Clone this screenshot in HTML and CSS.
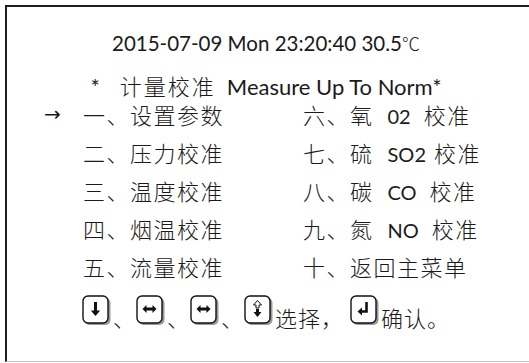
FILE: index.html
```html
<!DOCTYPE html>
<html lang="zh-CN">
<head>
    <meta charset="UTF-8">
    <title>计量校准</title>
    <link rel="stylesheet" href="styles.css">
</head>
<body>
    <div class="screen">
        <div class="title">2015-07-09 Mon 23:20:40 30.5<span class="cn deg">℃</span></div>
        <div class="subtitle">*<span class="cn sub-cn">计量校准</span>Measure Up To Norm*</div>

        <div class="menu">
            <span class="cursor">→</span>
            <span class="item">一、设置参数</span>
            <span class="item">六、氧<span class="code">02</span>校准</span>

            <span></span>
            <span class="item">二、压力校准</span>
            <span class="item">七、硫<span class="code tight">SO2</span>校准</span>

            <span></span>
            <span class="item">三、温度校准</span>
            <span class="item">八、碳<span class="code">CO</span>校准</span>

            <span></span>
            <span class="item">四、烟温校准</span>
            <span class="item">九、氮<span class="code">NO</span>校准</span>

            <span></span>
            <span class="item">五、流量校准</span>
            <span class="item">十、返回主菜单</span>
        </div>

        <div class="keys">
            <!-- 下 -->
            <svg class="key" viewBox="0 0 30 31" width="30" height="31">
                <rect x="2.5" y="3" width="26" height="27" rx="5" fill="#9a9a9a"/>
                <rect x="1" y="1" width="25" height="27" rx="5" fill="#fff" stroke="#111" stroke-width="1.4"/>
                <path d="M12 7h3v8.5h3.2l-4.7 5.5l-4.7-5.5h3.2z" fill="#111"/>
            </svg>
            <span class="sep">、</span>
            <!-- 左右 -->
            <svg class="key" viewBox="0 0 30 31" width="30" height="31">
                <rect x="2.5" y="3" width="26" height="27" rx="5" fill="#9a9a9a"/>
                <rect x="1" y="1" width="25" height="27" rx="5" fill="#fff" stroke="#111" stroke-width="1.4"/>
                <path d="M6.5 14l4-4v2.6h6v-2.6l4 4l-4 4v-2.6h-6v2.6z" fill="#111"/>
            </svg>
            <span class="sep">、</span>
            <svg class="key" viewBox="0 0 30 31" width="30" height="31">
                <rect x="2.5" y="3" width="26" height="27" rx="5" fill="#9a9a9a"/>
                <rect x="1" y="1" width="25" height="27" rx="5" fill="#fff" stroke="#111" stroke-width="1.4"/>
                <path d="M6.5 14l4-4v2.6h6v-2.6l4 4l-4 4v-2.6h-6v2.6z" fill="#111"/>
            </svg>
            <span class="sep">、</span>
            <!-- 上下 -->
            <svg class="key" viewBox="0 0 30 31" width="30" height="31">
                <rect x="2.5" y="3" width="26" height="27" rx="5" fill="#9a9a9a"/>
                <rect x="1" y="1" width="25" height="27" rx="5" fill="#fff" stroke="#111" stroke-width="1.4"/>
                <path d="M13.5 5.5l-4 4.5h2.5v3h3v-3h2.5z" fill="#fff" stroke="#111" stroke-width="1"/>
                <path d="M12 14h3v3h2.5l-4 5l-4-5h2.5z" fill="#111"/>
            </svg>
            <span class="label">选择，</span>
            <!-- 确认 -->
            <svg class="key" viewBox="0 0 30 31" width="30" height="31">
                <rect x="2.5" y="3" width="26" height="27" rx="5" fill="#9a9a9a"/>
                <rect x="1" y="1" width="25" height="27" rx="5" fill="#fff" stroke="#111" stroke-width="1.4"/>
                <path d="M16.5 7v9.5h-5" fill="none" stroke="#111" stroke-width="2.6"/>
                <path d="M7.5 16.5l4.5-4v8z" fill="#111"/>
            </svg>
            <span class="label">确认。</span>
        </div>
    </div>
</body>
</html>
```

FILE: styles.css
```css
body {
    margin: 0;
    background: #ffffff;
    color: #1a1a1a;
    font-family: 'Lato', 'Noto Sans CJK SC', sans-serif;
    overflow: hidden;
}
.screen {
    margin: 5px 0 0 5px;
    height: 357px;
    border-top: 2px solid #1e1e1e;
    border-left: 2px solid #1e1e1e;
    border-bottom: 1px solid #c4c4c4;
    box-sizing: border-box;
    padding-right: 4px;
}
.cn {
    font-family: 'Noto Sans CJK SC', sans-serif;
    font-weight: 300;
}
.title {
    margin-top: 22px;
    line-height: 28px;
    font-size: 20.5px;
    text-align: center;
}
.deg {
    font-size: 18px;
}
.subtitle {
    margin-top: 20px;
    line-height: 16px;
    font-size: 22px;
    text-align: center;
}
.sub-cn {
    font-size: 22px;
    letter-spacing: 2px;
    margin: 0 11px 0 20px;
}
.menu {
    display: grid;
    grid-template-columns: 38px 220px 1fr;
    grid-auto-rows: 38px;
    align-items: center;
    padding-left: 38px;
}
.cursor {
    font-family: 'DejaVu Sans', sans-serif;
    font-size: 20px;
    margin-left: -1px;
}
.item {
    font-family: 'Noto Sans CJK SC', sans-serif;
    font-weight: 300;
    font-size: 22px;
    letter-spacing: 1.5px;
    white-space: nowrap;
}
.code {
    font-family: 'Lato', sans-serif;
    font-weight: 400;
    font-size: 20px;
    letter-spacing: 0;
    margin: 0 13px 0 14px;
}
.code.tight {
    margin-right: 8px;
}
.keys {
    display: flex;
    align-items: flex-end;
    margin-top: 10px;
    padding-left: 75px;
}
.key {
    display: block;
    margin: 0 1px 0 0;
}
.sep, .label {
    font-family: 'Noto Sans CJK SC', sans-serif;
    font-weight: 300;
    font-size: 22px;
    letter-spacing: 1px;
    line-height: 22px;
    margin-bottom: -2px;
}
.label {
    margin-right: 6px;
}
```
